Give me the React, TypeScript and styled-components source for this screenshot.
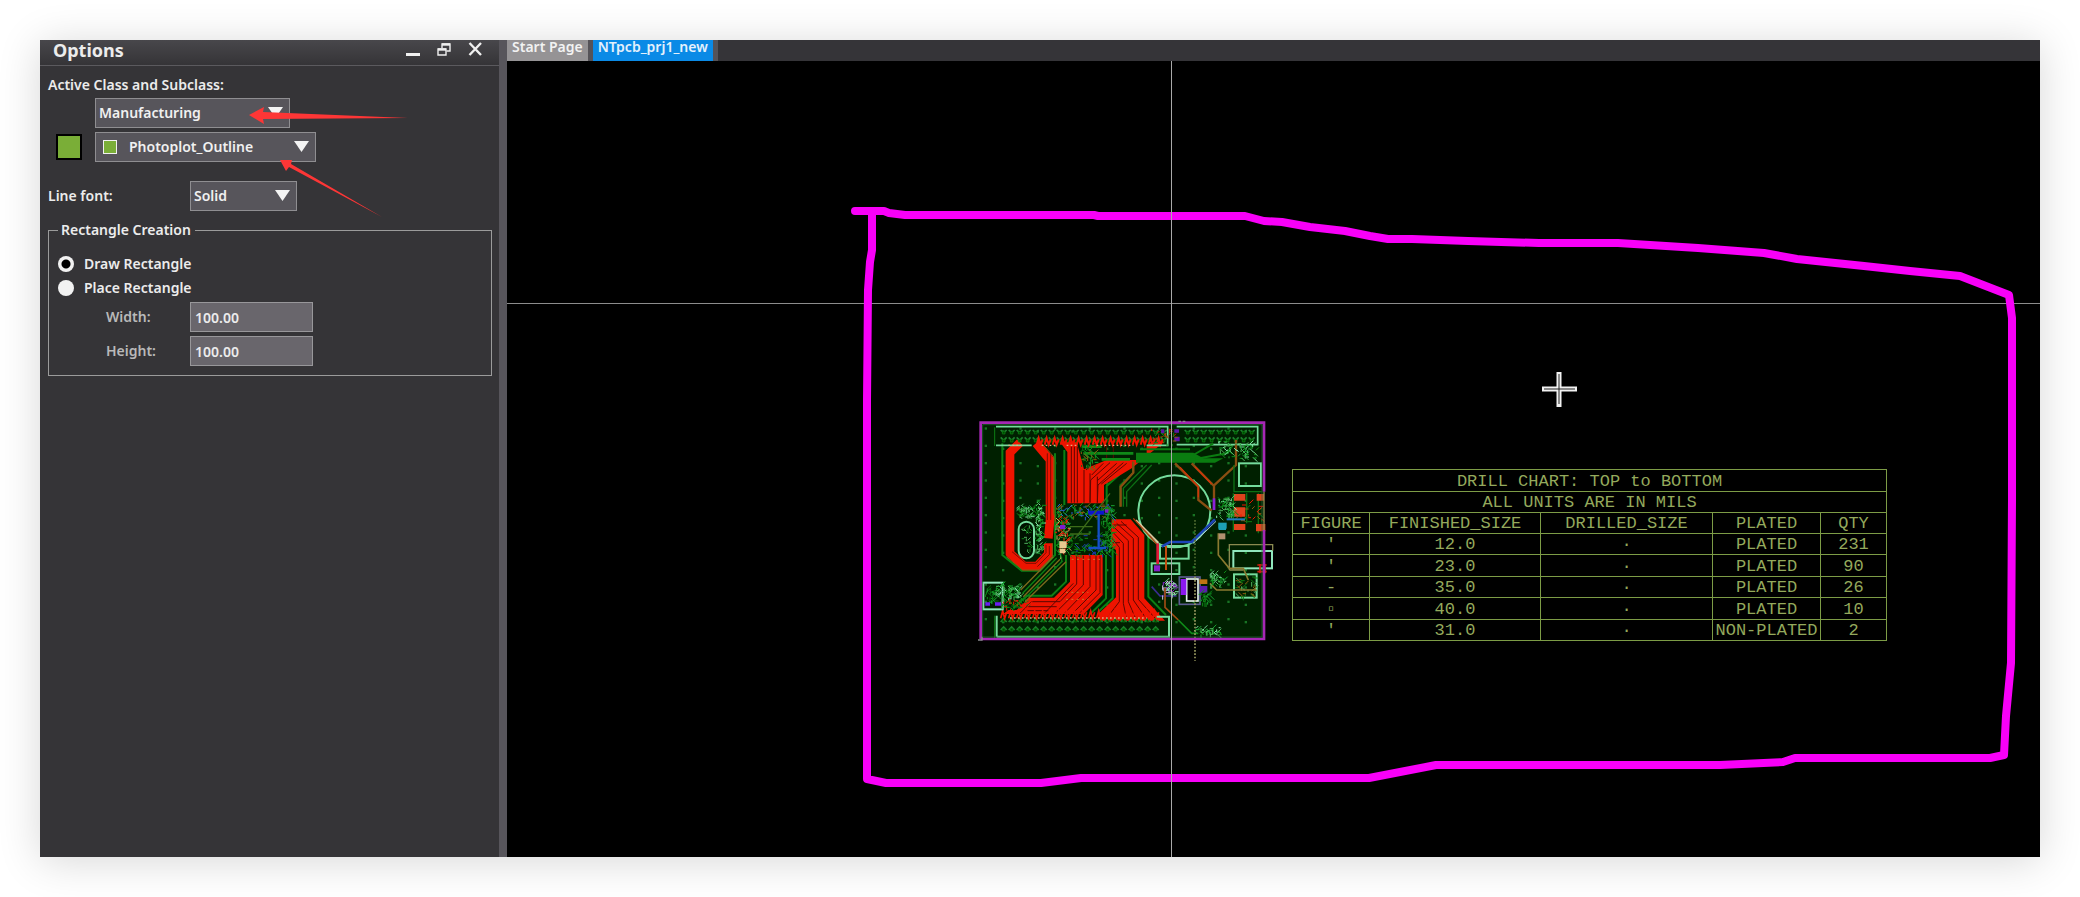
import React from "react";
import styled, { createGlobalStyle } from "styled-components";

const GlobalStyle = createGlobalStyle`
  *, *::before, *::after { box-sizing: border-box; }
  body {
    margin: 0;
    background: #fff;
    font-family: "Noto Sans", "Open Sans", sans-serif;
  }
`;

const Page = styled.div`
  display: flex;
  min-height: 100vh;
  padding: 40px;
`;

const Window = styled.main`
  position: relative;
  flex: 1;
  display: flex;
  min-width: 0;
  background: #000;
  box-shadow: 0 4px 40px rgba(0, 0, 0, 0.16);
`;

const Panel = styled.aside`
  flex: none;
  width: 467px;
  border-right: 8px solid #57555b;
  background: #353437;
  color: #ececec;
  font-size: 14px;
  font-weight: 600;
  line-height: 20px;
`;

const TitleBar = styled.header`
  display: flex;
  align-items: center;
  justify-content: space-between;
  height: 26px;
  padding: 0 16px 6px 13px;
  border-bottom: 1px solid #5b5a5e;
  background: linear-gradient(#48474b, #353437);
`;

const Title = styled.h1`
  margin: 0;
  font-size: 18px;
  font-weight: 700;
  line-height: 20px;
`;

const WindowButtons = styled.div`
  display: flex;
  gap: 16px;
`;

const IconButton = styled.button`
  display: flex;
  padding: 0;
  border: 0;
  background: none;
  color: #f0f0f0;
`;

const Form = styled.form`
  padding: 9px 7px 0 8px;
`;

const GroupLabel = styled.label`
  display: block;
  height: 23px;
`;

const ClassGrid = styled.div`
  display: grid;
  grid-template-columns: 39px 1fr;
  row-gap: 4px;
  justify-items: start;
  align-items: center;
  padding-left: 8px;
`;

const ColorButton = styled.button`
  width: 26px;
  height: 26px;
  padding: 0;
  border: 2px solid #000;
  background: #7aae37;
`;

const SelectBox = styled.div<{ $width: number }>`
  position: relative;
  grid-column: 2;
  width: ${(p) => p.$width}px;
  height: 30px;
`;

const Select = styled.select<{ $indent?: boolean }>`
  appearance: none;
  display: block;
  width: 100%;
  height: 100%;
  padding: 0 24px 0 ${(p) => (p.$indent ? 33 : 3)}px;
  border: 1px solid #8f8e91;
  border-radius: 0;
  background: #57555b;
  color: #f0f0f0;
  font: inherit;
`;

const SelectArrow = styled.svg`
  position: absolute;
  right: 7px;
  top: 9px;
  pointer-events: none;
`;

const Chip = styled.span`
  position: absolute;
  left: 8px;
  top: 8px;
  width: 14px;
  height: 14px;
  border: 1px solid #f0f0f0;
  background: #7aae37;
`;

const FontRow = styled.div`
  display: grid;
  grid-template-columns: 142px 1fr;
  align-items: center;
  margin-top: 19px;
`;

const Fieldset = styled.fieldset`
  margin: 9px 0 0;
  padding: 12px 9px 7px;
  border: 1px solid #9b9b9b;
  min-width: 0;
`;

const Legend = styled.legend`
  padding: 0 4px 0 3px;
`;

const RadioRow = styled.label`
  display: flex;
  align-items: center;
  gap: 10px;
  height: 24px;
`;

const Radio = styled.input`
  appearance: none;
  width: 16px;
  height: 16px;
  margin: 0;
  border-radius: 50%;
  background: #f2f2f2;
  &:checked {
    background: radial-gradient(circle, #000 4px, #f2f2f2 5px);
  }
`;

const FieldRow = styled.label`
  display: grid;
  grid-template-columns: 84px 123px;
  align-items: center;
  padding: 2px 0 2px 48px;
  color: #b9b9b9;
`;

const NumberInput = styled.input`
  width: 100%;
  height: 30px;
  padding: 0 4px;
  border: 1px solid #98979a;
  background: #69666c;
  color: #ececec;
  font: inherit;
`;

const Workspace = styled.section`
  flex: 1;
  display: flex;
  flex-direction: column;
  min-width: 0;
`;

const TabBar = styled.nav`
  display: flex;
  gap: 5px;
  height: 21px;
  background: #353438;
`;

const Tab = styled.button<{ $active?: boolean }>`
  height: 21px;
  padding: 0 5px 8px;
  border: 0;
  background: ${(p) => (p.$active ? "#0a8ae6" : "#959395")};
  box-shadow: 5px 0 0 #555358;
  color: ${(p) => (p.$active ? "#e4f1fc" : "#f2f2f2")};
  font: inherit;
  font-size: 14px;
  font-weight: 600;
  line-height: 14px;
`;

const Canvas = styled.div`
  position: relative;
  flex: 1;
  overflow: hidden;
  background: #000;
`;

const BoardDrawing = styled.svg`
  position: absolute;
  left: 453px;
  top: 349px;
`;

const DrillTable = styled.table`
  position: absolute;
  left: 785px;
  top: 408px;
  width: 594px;
  table-layout: fixed;
  border-collapse: collapse;
  color: #94a95c;
  font-family: "Liberation Mono", monospace;
  font-size: 17px;
  line-height: 19px;
  text-align: center;
`;

const Cell = styled.td<{ $tall?: boolean }>`
  height: ${(p) => (p.$tall ? 22 : 21)}px;
  padding: 1px 0 0;
  border: 1px solid #7d9c46;
  font-weight: 400;
  white-space: nowrap;
`;

const Overlay = styled.svg`
  position: absolute;
  left: 0;
  top: 0;
  overflow: visible;
  pointer-events: none;
`;

const CrossV = styled.div`
  position: absolute;
  left: 664px;
  top: 0;
  bottom: 0;
  width: 1px;
  background: #a9a9a9;
`;

const CrossH = styled.div`
  position: absolute;
  top: 242px;
  left: 0;
  right: 0;
  height: 1px;
  background: #8c8c8c;
`;

const Arrow = () => (
  <SelectArrow width="15" height="12" viewBox="0 0 15 12" aria-hidden="true">
    <path d="M0 0H15L7.5 11Z" fill="#f4f4f4" />
  </SelectArrow>
);

const RED = "#ee1400";
const SILK = "#74dc9c";

/* Deterministic scatter for vias, silkscreen legends and dense routing. */
const makeRandom = (seed: number) => () => {
  seed = (seed * 16807) % 2147483647;
  return seed / 2147483647;
};

interface ScatterProps {
  x: number;
  y: number;
  w: number;
  h: number;
  n: number;
  colors: string[];
  seed: number;
}

function Scatter({ x, y, w, h, n, colors, seed }: ScatterProps) {
  const rnd = makeRandom(seed);
  const groups = colors.map(() => "");
  for (let i = 0; i < n; i++) {
    const px = Math.round(x + rnd() * w);
    const py = Math.round(y + rnd() * h);
    const dir = Math.floor(rnd() * 4);
    const len = 5 + Math.round(rnd() * 9);
    const step = [`h${len}`, `v${len}`, `l${len} ${len}`, `l${len} ${-len}`][dir];
    groups[i % colors.length] += `M${px} ${py}${step}`;
  }
  return (
    <>
      {groups.map((d, i) => (
        <path key={i} d={d} stroke={colors[i]} strokeWidth="3" fill="none" />
      ))}
    </>
  );
}

const range = (from: number, to: number, step: number) => {
  const out: number[] = [];
  for (let v = from; v <= to; v += step) out.push(v);
  return out;
};

const GREENS = ["#0c8d16", "#17a030", "#0a6a12"];
const LEGENDS = ["#7fe0a4", "#18a032", "#0c8d16", "#4fae5c"];

function Board() {
  return (
    <BoardDrawing width="320" height="260" viewBox="0 0 960 780" fill="none" aria-label="Circuit board">
      <rect x="62" y="38" width="850" height="649" fill="#002000" />
      {range(77, 890, 52).map((x, c) =>
        range(c % 2 ? 64 : 55, 670, 52).map((y) => (
          <rect key={`${x}-${y}`} x={x - 3} y={y - 3} width="7" height="7" fill="#187424" />
        ))
      )}

      {/* green routing around the copper pours */}
      <path
        d="M127 100V435L185 482H240L285 435V130M313 120V285M440 285V228L510 165M318 435V515L275 557H200L160 595M438 435V565L395 608M565 370V560L618 615M458 420V565L415 605"
        stroke="#0c8014"
        strokeWidth="6"
      />

      {/* copper: long loop on the left */}
      <path d="M180 98L150 128V430L192 468H232L265 432V400M265 385L270 330V150L228 100" stroke={RED} strokeWidth="26" />
      <path d="M245 100L281 140V310L292 350M277 400V440L238 480H188L139 440" stroke="#8c5a10" strokeWidth="3" />
      <path d="M262 130V330M272 130V330M258 405V428L228 460H198L156 425M268 408V434L232 470" stroke="#4a0600" strokeWidth="2" />

      {/* copper: upper bus */}
      <path d="M300 96H350L372 178L440 150H560V110L575 96H612L515 175L432 225V280H322V126Z" fill={RED} />
      <path
        d="M334 110V278M343 110V278M352 110V278M372 180V278M390 190V278L392 210L450 158M412 200V278L414 225L490 158M378 180L402 158M395 195L430 160M412 212L470 160M424 222L500 160M440 105V150M460 105V150"
        stroke="#5c0700"
        strokeWidth="3"
      />
      <path d="M365 110H425M370 130H520M425 148H510" stroke="#0f8a18" strokeWidth="8" />
      <Scatter x={362} y={100} w={45} h={75} n={50} colors={[...GREENS, "#8c5a10"]} seed={33} />

      {/* copper: lower left bus */}
      <path d="M330 435H428V555L372 612H130L145 600H170L208 563H282L330 515Z" fill={RED} />
      <path
        d="M350 437V522L300 575H215L180 610M370 437V525L290 605M390 437V530L315 608M408 437V540L340 608M420 437V548L360 608M340 520L255 608M205 590H290M195 602H265"
        stroke="#5c0700"
        strokeWidth="3"
      />
      <path d="M318 547H385M318 568H385M335 448H420" stroke="#c8752c" strokeWidth="3" strokeDasharray="6 10" />

      {/* copper: lower right bus */}
      <path d="M455 328H512L553 375V565L615 632H415V612L468 562V420L452 408Z" fill={RED} />
      <path
        d="M470 340L520 385V570L560 628M483 334L535 382V568L590 630M460 350L505 392V575L528 628M458 366L490 400V580L500 628M455 384L478 412V575L440 625M460 345H500M452 398H480"
        stroke="#5c0700"
        strokeWidth="3"
      />

      {/* header footprints along the top and bottom edges */}
      {range(122, 880, 24).filter((x) => x < 610 || x > 660).map((x) => (
        <g key={x}>
          <path d={`M${x} 60l9 8l9 -8M${x} 82l9 9l9 -9`} stroke="#1f8030" strokeWidth="5" />
          <path d={`M${x + 5} 64h8v8h-8zM${x + 5} 88h8v8h-8z`} fill="#004800" stroke="#0b8414" strokeWidth="2" />
        </g>
      ))}
      {range(122, 600, 24).map((x) => (
        <g key={x}>
          <path d={`M${x} 660l9 -9l9 9M${x} 636l9 -9l9 9`} stroke="#1f8030" strokeWidth="5" />
          <path d={`M${x + 5} 655h8v8h-8zM${x + 5} 628h8v8h-8z`} fill="#004800" stroke="#0b8414" strokeWidth="2" />
          <path d={`M${x} 625l6 -22l6 22l6 -18`} stroke={RED} strokeWidth="5" />
        </g>
      ))}
      {range(230, 590, 24).map((x) => (
        <path key={x} d={`M${x} 104l6 -20l6 20l6 -16`} stroke={RED} strokeWidth="6" />
      ))}
      <path d="M108 50H623V106H560M215 106H108Z" stroke={SILK} strokeWidth="5" />
      <path d="M650 50H893V104H650" stroke={SILK} strokeWidth="5" />
      <path d="M110 680V617M110 680H627V620H590" stroke={SILK} strokeWidth="6" />
      <path d="M104 52V108M104 617V684" stroke="#0c7d14" strokeWidth="3" />
      <path d="M145 106H185M245 106H290M320 106H350M410 106H520M150 624H560" stroke="#e0b080" strokeWidth="4" strokeDasharray="5 7" />
      <path d="M603 58h10v12h-10zM643 58h14v10h-14zM643 80h16v14h-16z" fill="#5a14a8" />
      <Scatter x={575} y={52} w={70} h={55} n={26} colors={[RED, "#8c5a10", "#0c7d14"]} seed={31} />

      {/* green plane and battery holder */}
      <path d="M528 128H700L730 145H790L765 158H528Z" fill="#0a7c10" />
      <path d="M540 118H690M700 135L760 100M690 150L800 130L815 110" stroke="#0a7c10" strokeWidth="6" />
      <circle cx="643" cy="304" r="108" stroke={SILK} strokeWidth="6" />
      <path d="M560 165L490 235V290M575 165L500 245V290M518 155V190L480 225V290" stroke="#0c7014" strokeWidth="4" />
      <path d="M520 155V188L482 230V290M645 160L715 230V270L755 302M695 160L762 228V300M762 226L828 165V90" stroke="#8a4e12" strokeWidth="7" />
      <path d="M660 172L715 230V262M705 170L755 222" stroke="#d03408" strokeWidth="4" />

      {/* right hand parts */}
      <rect x="837" y="160" width="66" height="68" stroke={SILK} strokeWidth="6" />
      <path d="M822 165V245H905M820 250V365M860 250V340M895 250V370" stroke="#0c7014" strokeWidth="4" />
      <path d="M822 252h34v20h-34zM890 252h22v20h-22zM822 292h34v28h-34zM822 342h34v18h-34zM888 342h28v22h-28z" fill="#e0421c" />
      <Scatter x={770} y={262} w={48} h={60} n={70} colors={LEGENDS} seed={7} />
      <Scatter x={775} y={90} w={40} h={50} n={26} colors={LEGENDS} seed={9} />
      <Scatter x={822} y={100} w={66} h={45} n={46} colors={LEGENDS} seed={10} />
      <Scatter x={810} y={280} w={95} h={60} n={28} colors={["#0c7d14", RED, "#8c5a10"]} seed={11} />
      <path d="M762 265V300" stroke="#8a20d8" strokeWidth="8" />
      <path d="M775 338H800V356H775Z" fill="#1da0b4" />
      <path d="M800 328H855" stroke="#1f7cc0" strokeWidth="6" />
      <rect x="820" y="423" width="116" height="52" stroke="#8fe6bc" strokeWidth="6" />
      <path d="M808 480V404H938V422M808 480H850" stroke="#8a8a50" strokeWidth="4" />
      <rect x="822" y="493" width="68" height="70" stroke={SILK} strokeWidth="6" />
      <Scatter x={826} y={498} w={58} h={60} n={40} colors={["#0c7d14", "#4fae5c", "#8c5a10"]} seed={12} />
      <path d="M775 370V435L808 475H850L865 510M750 520L770 540H890" stroke="#8a7a30" strokeWidth="5" />
      <path d="M776 340h22v20h-22z" fill="#1da0b4" />
      <path d="M776 370h20v18h-20z" fill="#b09070" />
      <path d="M892 465h28M892 485h28M900 462v28M915 462v28" stroke="#d01c10" strokeWidth="5" />

      {/* regulator area */}
      <rect x="600" y="408" width="86" height="38" stroke={SILK} strokeWidth="6" />
      <rect x="575" y="460" width="83" height="32" stroke={SILK} strokeWidth="6" />
      <path d="M528 330L595 398" stroke="#e0c8a0" strokeWidth="5" />
      <path d="M520 325L590 402" stroke="#b84010" strokeWidth="4" />
      <path d="M605 410L630 396H695L765 328" stroke="#1c44b8" strokeWidth="8" />
      <path d="M700 400L768 334" stroke="#a8c4d8" strokeWidth="3" />
      <path d="M593 400V462" stroke="#e01838" strokeWidth="8" />
      <path d="M618 408V480" stroke="#c04c10" strokeWidth="6" />
      <path d="M582 466h18v18h-18z" fill="#8420c8" />
      <path d="M575 530L600 558H650" stroke="#3a2c90" strokeWidth="5" />
      <Scatter x={608} y={515} w={40} h={42} n={52} colors={["#d8c8e8", "#8420c8", "#7fe0a4"]} seed={15} />
      <rect x="658" y="501" width="62" height="82" stroke="#5c5c90" strokeWidth="5" />
      <rect x="680" y="507" width="34" height="66" fill="#000" stroke="#e4f4ec" strokeWidth="5" />
      <path d="M662 507h17v48h-17z" fill="#8c18f0" />
      <path d="M720 528h22v20h-22z" fill="#5c1cb0" />
      <path d="M718 508h24v14h-24z" fill="#c07414" />
      <Scatter x={716} y={550} w={34} h={28} n={34} colors={GREENS} seed={16} />
      <Scatter x={750} y={485} w={42} h={40} n={50} colors={LEGENDS} seed={17} />
      <Scatter x={702} y={652} w={75} h={22} n={50} colors={LEGENDS} seed={18} />
      <path d="M615 535V592L655 630" stroke="#a04c14" strokeWidth="5" />
      <path d="M655 630L695 670H715" stroke="#0f8a18" strokeWidth="5" />
      <path d="M705 500V752" stroke="#9a9a60" strokeWidth="5" strokeDasharray="5 5" />
      <path d="M705 330V500" stroke="#4f6a30" strokeWidth="5" strokeDasharray="5 5" />

      {/* microcontroller */}
      <Scatter x={290} y={285} w={165} h={36} n={130} colors={["#0f8a18", "#17a030", "#2a5ad0", "#8c5a10"]} seed={20} />
      <Scatter x={285} y={320} w={40} h={120} n={110} colors={["#0f8a18", "#c8b060", "#17a030", RED]} seed={21} />
      <Scatter x={325} y={375} w={125} h={60} n={90} colors={["#0c8d16", "#0f8a18", "#1a3cb0"]} seed={22} />
      <Scatter x={425} y={290} w={35} h={140} n={90} colors={["#0c8d16", "#0f8a18", "#17a030"]} seed={23} />
      <path d="M385 302h48v12h-48z" fill="#0c14d0" />
      <path d="M416 312V412M385 414H438" stroke="#1450c8" strokeWidth="7" />
      <path d="M330 350H398M330 372H390M345 385L450 250" stroke="#3c6c18" strokeWidth="4" />
      <path d="M298 394h22v20h-22zM300 416h16v14h-16z" fill="#e8c890" />
      <path d="M300 345h16v12h-16zM435 298h10v10h-10z" fill="#7c1cd0" />

      {/* crystal and left connector */}
      <rect x="176" y="335" width="46" height="110" rx="23" fill="#001200" stroke={SILK} strokeWidth="6" />
      <Scatter x={184} y={345} w={28} h={85} n={22} colors={["#4fae5c", "#0c7d14"]} seed={24} />
      <Scatter x={170} y={285} w={50} h={38} n={55} colors={LEGENDS} seed={25} />
      <Scatter x={226} y={270} w={20} h={160} n={85} colors={LEGENDS} seed={26} />
      <rect x="70" y="518" width="58" height="80" stroke="#8fe6bc" strokeWidth="6" />
      <Scatter x={76} y={525} w={46} h={50} n={36} colors={GREENS} seed={27} />
      <path d="M76 577h14v10h-14zM105 577h18v10h-18z" fill="#6a1cf0" />
      <Scatter x={108} y={525} w={72} h={40} n={85} colors={LEGENDS} seed={28} />
      <Scatter x={125} y={565} w={80} h={30} n={45} colors={["#0c7d14", RED, "#0f8a18"]} seed={29} />
      <path d="M280 440L182 540M300 448L190 560M318 455L195 575" stroke="#7c6a1c" strokeWidth="4" />
      <path d="M290 444L188 550M308 452L192 568" stroke="#0c8014" strokeWidth="4" />

      {/* board outline */}
      <path d="M912 245V38H62V687" stroke="#a528b4" strokeWidth="8" />
      <path d="M62 687H912V360" stroke="#a528b4" strokeWidth="8" />
      <path d="M912 245V360" stroke="#8a8a50" strokeWidth="4" />
      <path d="M68 44H906V681H68Z" stroke="#2a6c3c" strokeWidth="2" />
      <path d="M54 690H66V680M655 34h8M668 34h8" stroke="#8a8a90" strokeWidth="4" />
    </BoardDrawing>
  );
}

const drillRows = [
  ["'", "12.0", "PLATED", "231"],
  ["'", "23.0", "PLATED", "90"],
  ["-", "35.0", "PLATED", "26"],
  ["▫", "40.0", "PLATED", "10"],
  ["'", "31.0", "NON-PLATED", "2"],
];

function DrillChart() {
  return (
    <DrillTable>
      <colgroup>
        <col width="77" />
        <col width="171" />
        <col width="172" />
        <col width="108" />
        <col width="66" />
      </colgroup>
      <thead>
        <tr>
          <Cell as="th" $tall colSpan={5}>DRILL CHART: TOP to BOTTOM</Cell>
        </tr>
        <tr>
          <Cell as="th" colSpan={5}>ALL UNITS ARE IN MILS</Cell>
        </tr>
        <tr>
          {["FIGURE", "FINISHED_SIZE", "DRILLED_SIZE", "PLATED", "QTY"].map((name) => (
            <Cell as="th" scope="col" key={name}>{name}</Cell>
          ))}
        </tr>
      </thead>
      <tbody>
        {drillRows.map(([figure, size, plated, qty], i) => (
          <tr key={size}>
            <Cell $tall={i % 2 === 1}>{figure}</Cell>
            <Cell>{size}</Cell>
            <Cell>·</Cell>
            <Cell>{plated}</Cell>
            <Cell>{qty}</Cell>
          </tr>
        ))}
      </tbody>
    </DrillTable>
  );
}

export default function App() {
  return (
    <>
      <GlobalStyle />
      <Page>
        <Window>
          <Panel>
            <TitleBar>
              <Title>Options</Title>
              <WindowButtons>
                <IconButton aria-label="Minimize">
                  <svg width="15" height="15" viewBox="0 0 15 15">
                    <path d="M0 11H14V14H0Z" fill="currentColor" />
                  </svg>
                </IconButton>
                <IconButton aria-label="Restore">
                  <svg width="15" height="15" viewBox="0 0 15 15" fill="none" stroke="currentColor">
                    <path d="M1 7H9V13H1Z" strokeWidth="1.4" />
                    <path d="M1 7.5H9" strokeWidth="2.4" />
                    <path d="M5 6V2H13V9H9.5" strokeWidth="1.4" />
                    <path d="M5 2.5H13" strokeWidth="2.4" />
                  </svg>
                </IconButton>
                <IconButton aria-label="Close">
                  <svg width="15" height="15" viewBox="0 0 15 15">
                    <path d="M1.5 1L13 13M13 1L1.5 13" stroke="currentColor" strokeWidth="2.4" />
                  </svg>
                </IconButton>
              </WindowButtons>
            </TitleBar>
            <Form>
              <GroupLabel htmlFor="class">Active Class and Subclass:</GroupLabel>
              <ClassGrid>
                <SelectBox $width={195}>
                  <Select id="class">
                    <option>Manufacturing</option>
                  </Select>
                  <Arrow />
                </SelectBox>
                <ColorButton type="button" aria-label="Subclass color" />
                <SelectBox $width={221}>
                  <Select $indent aria-label="Subclass">
                    <option>Photoplot_Outline</option>
                  </Select>
                  <Chip />
                  <Arrow />
                </SelectBox>
              </ClassGrid>
              <FontRow>
                <label htmlFor="line-font">Line font:</label>
                <SelectBox $width={107}>
                  <Select id="line-font">
                    <option>Solid</option>
                  </Select>
                  <Arrow />
                </SelectBox>
              </FontRow>
              <Fieldset>
                <Legend>Rectangle Creation</Legend>
                <RadioRow>
                  <Radio type="radio" name="mode" defaultChecked />
                  Draw Rectangle
                </RadioRow>
                <RadioRow>
                  <Radio type="radio" name="mode" />
                  Place Rectangle
                </RadioRow>
                <FieldRow>
                  Width:
                  <NumberInput defaultValue="100.00" />
                </FieldRow>
                <FieldRow>
                  Height:
                  <NumberInput defaultValue="100.00" />
                </FieldRow>
              </Fieldset>
            </Form>
          </Panel>
          <Workspace>
            <TabBar>
              <Tab>Start Page</Tab>
              <Tab $active>NTpcb_prj1_new</Tab>
            </TabBar>
            <Canvas>
              <Board />
              <DrillChart />
              <CrossH />
              <Overlay width="1533" height="796" viewBox="507 61 1533 796" fill="none" aria-hidden="true">
                <path
                  d="M855 211H884L889 213L905 215H1094L1098 216H1245L1264 221L1282 222L1310 227L1345 231L1370 236L1388 239H1412L1468 241L1539 243H1618L1698 248L1764 253L1797 259L1864 266L1910 271L1960 276L2009 295L2012 318V500L2011 663L2006 716L2004 755L1990 758H1795L1783 762L1720 765H1436L1369 778H1081L1041 783H886L867 779V400L868 290L870 262L872 250V211"
                  stroke="#f800f8"
                  strokeWidth="8"
                  strokeLinecap="round"
                  strokeLinejoin="round"
                />
                <path d="M1559 372V407M1542 389H1577" stroke="#f2f2f2" strokeWidth="5" />
                <path d="M1559 374V404M1544 389H1575" stroke="#202020" strokeWidth="1" />
              </Overlay>
              <CrossV />
            </Canvas>
          </Workspace>
          <Overlay width="400" height="200" viewBox="40 40 400 200" aria-hidden="true">
            <path d="M249 115L264 107L263 112L408 118L263 119L264 124Z" fill="#fd3636" />
            <path d="M280 160L292 160L291 164L382 217L289 167L286 171Z" fill="#fd3636" />
          </Overlay>
        </Window>
      </Page>
    </>
  );
}
